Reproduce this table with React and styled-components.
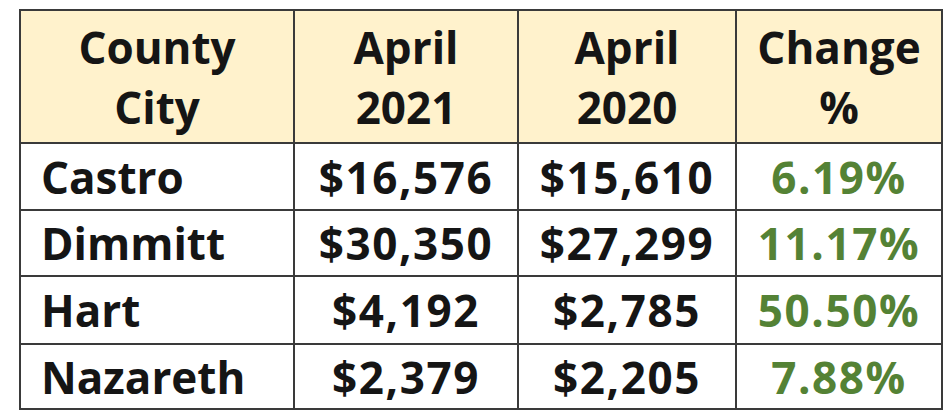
import React from "react";
import styled, { createGlobalStyle } from "styled-components";

const Global = createGlobalStyle`
  html, body { margin: 0; padding: 0; background: #ffffff; }
  body { font-family: "Open Sans", "Liberation Sans", sans-serif; }
`;

const Page = styled.div`
  padding: 9px 0 0 19px;
`;

const Table = styled.table`
  border-collapse: collapse;
  table-layout: fixed;
  width: 922px;
  font-weight: 700;
  font-size: 44px;
  color: #151515;
  border: 2px solid #3a3a3a;
`;

const Col = styled.col`
  width: ${(p) => p.$w}px;
`;

const HeadCell = styled.th`
  background: #fff2cc;
  height: 131px;
  padding: 0;
  font-weight: 700;
  line-height: 60px;
  text-align: center;
  border: 2px solid #3a3a3a;
`;

const Row = styled.tr`
  height: ${(p) => p.$h}px;
`;

const Cell = styled.td`
  padding: 0 0 0 ${(p) => (p.$left ? "20px" : "0")};
  text-align: ${(p) => (p.$left ? "left" : "center")};
  color: ${(p) => (p.$green ? "#548235" : "#151515")};
  letter-spacing: ${(p) => (p.$left ? "0" : "1.6px")};
  border: 2px solid #3a3a3a;
  line-height: 1;
  white-space: nowrap;
`;

const rows = [
  ["Castro", "$16,576", "$15,610", "6.19%", 67],
  ["Dimmitt", "$30,350", "$27,299", "11.17%", 66],
  ["Hart", "$4,192", "$2,785", "50.50%", 68],
  ["Nazareth", "$2,379", "$2,205", "7.88%", 65],
];

export default function App() {
  return (
    <Page>
      <Global />
      <Table>
        <colgroup>
          <Col $w={274} />
          <Col $w={224} />
          <Col $w={218} />
          <Col $w={206} />
        </colgroup>
        <thead>
          <tr>
            <HeadCell>County<br />City</HeadCell>
            <HeadCell>April<br />2021</HeadCell>
            <HeadCell>April<br />2020</HeadCell>
            <HeadCell>Change<br />%</HeadCell>
          </tr>
        </thead>
        <tbody>
          {rows.map(([name, a, b, c, h]) => (
            <Row key={name} $h={h}>
              <Cell $left>{name}</Cell>
              <Cell>{a}</Cell>
              <Cell>{b}</Cell>
              <Cell $green>{c}</Cell>
            </Row>
          ))}
        </tbody>
      </Table>
    </Page>
  );
}
